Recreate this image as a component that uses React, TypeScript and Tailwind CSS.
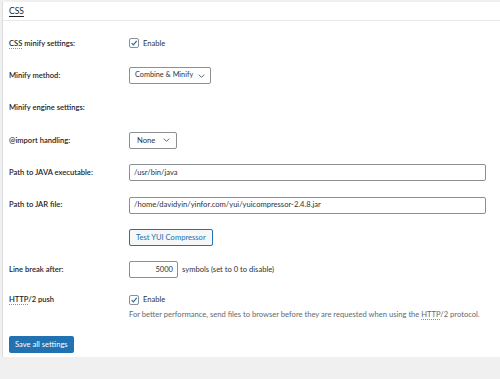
import React from "react";

const font = { fontFamily: 'Lato, "Noto Sans", sans-serif' };

const Check = () => (
  <span className="inline-flex h-[10px] w-[10px] items-center justify-center rounded-[2px] border border-[#8c8f94] bg-white">
    <svg viewBox="0 0 10 10" className="h-[10px] w-[10px]">
      <path d="M2 5.2 L4.2 7.4 L8.4 2.4" fill="none" stroke="#2271b1" strokeWidth="1.6" />
    </svg>
  </span>
);

const Chevron = () => (
  <svg viewBox="0 0 10 6" className="h-[4px] w-[7px] shrink-0">
    <path d="M1 1 L5 5 L9 1" fill="none" stroke="#50575e" strokeWidth="1.4" />
  </svg>
);

const Row = ({ label, children }: { label: React.ReactNode; children?: React.ReactNode }) => (
  <div className="flex h-[32.4px] items-center">
    <div className="w-[120px] shrink-0 font-semibold text-[#1d2327]">{label}</div>
    <div className="flex flex-1 items-center pr-[8px]">{children}</div>
  </div>
);

const Abbr = ({ children }: { children: React.ReactNode }) => (
  <span className="underline decoration-dotted decoration-[#8c8f94] underline-offset-2">{children}</span>
);

export default function App() {
  return (
    <div className="h-[379px] w-[500px] overflow-hidden bg-[#f0f0f1] pt-[2px] text-[7.6px] text-[#2c3338]" style={font}>
      <div className="ml-[2px] border-l border-[#dcdcde] bg-white">
        <div className="flex h-[19px] items-center border-b border-[#eaeaea] px-[6px] text-[8.5px] text-[#1d2327]">
          <span className="underline underline-offset-2">CSS</span>
        </div>
        <div className="px-[6px] pt-[6px]">
          <Row label={<><Abbr>CSS</Abbr> minify settings:</>}>
            <label className="flex items-center gap-[4px]">
              <Check />
              <span>Enable</span>
            </label>
          </Row>
          <Row label="Minify method:">
            <div className="flex h-[17px] w-[82px] items-center justify-between whitespace-nowrap rounded-[2px] border border-[#8c8f94] bg-white pl-[5px] pr-[5px] text-[7.3px]">
              <span>Combine &amp; Minify</span>
              <Chevron />
            </div>
          </Row>
          <Row label="Minify engine settings:" />
          <Row label="@import handling:">
            <div className="flex h-[17px] w-[48px] items-center justify-between rounded-[2px] border border-[#8c8f94] bg-white pl-[7px] pr-[6px]">
              <span>None</span>
              <Chevron />
            </div>
          </Row>
          <Row label="Path to JAVA executable:">
            <div className="flex h-[17px] w-full items-center rounded-[2px] border border-[#8c8f94] bg-white px-[4px]">
              /usr/bin/java
            </div>
          </Row>
          <Row label="Path to JAR file:">
            <div className="flex h-[17px] w-full items-center rounded-[2px] border border-[#8c8f94] bg-white px-[4px]">
              /home/davidyin/yinfor.com/yui/yuicompressor-2.4.8.jar
            </div>
          </Row>
          <Row label="">
            <button className="flex h-[17px] items-center whitespace-nowrap rounded-[2px] border border-[#2271b1] bg-[#f6f7f7] px-[6px] text-[#2271b1]">
              Test YUI Compressor
            </button>
          </Row>
          <Row label="Line break after:">
            <div className="flex items-center gap-[4px]">
              <div className="flex h-[17px] w-[49px] items-center justify-end rounded-[2px] border border-[#8c8f94] bg-white px-[4px]">
                5000
              </div>
              <span>symbols (set to 0 to disable)</span>
            </div>
          </Row>
          <div className="flex pt-[8px]">
            <div className="w-[120px] shrink-0 font-semibold text-[#1d2327]">
              <Abbr>HTTP</Abbr>/2 push
            </div>
            <div className="flex flex-col gap-[3px]">
              <label className="flex items-center gap-[4px]">
                <Check />
                <span>Enable</span>
              </label>
              <p className="whitespace-nowrap text-[#646970]">
                For better performance, send files to browser before they are requested when using the <Abbr>HTTP</Abbr>/2 protocol.
              </p>
            </div>
          </div>
          <div className="pb-[4px] pt-[16px]">
            <button className="h-[17px] whitespace-nowrap rounded-[2px] bg-[#2271b1] px-[6px] text-white">Save all settings</button>
          </div>
        </div>
      </div>
    </div>
  );
}
